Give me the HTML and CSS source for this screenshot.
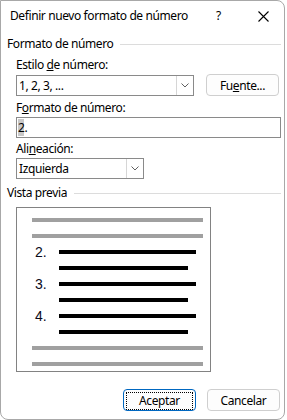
FILE: index.html
```html
<!DOCTYPE html>
<html lang="es">
<head>
  <meta charset="UTF-8" />
  <meta name="viewport" content="width=device-width, initial-scale=1.0" />
  <title>Definir nuevo formato de número</title>
  <link rel="stylesheet" href="styles.css">
</head>
<body>
  <div class="dialog">
    <div class="titlebar">
      <span class="title">Definir nuevo formato de número</span>
      <span class="help">?</span>
      <svg class="close" width="11" height="11" viewBox="0 0 11 11">
        <path d="M0.5 0.5 L10.5 10.5 M10.5 0.5 L0.5 10.5" stroke="#000" stroke-width="1.1" fill="none"/>
      </svg>
    </div>

    <div class="content">
      <div class="group-head"><span>Formato de número</span><div class="rule"></div></div>

      <div class="label label-style">Estilo <u>d</u>e número:</div>
      <div class="row">
        <div class="combo combo-style">
          <span class="value">1, 2, 3, ...</span>
          <span class="arrow">
            <svg width="8" height="5" viewBox="0 0 8 5"><path d="M0.5 0.5 L4 4 L7.5 0.5" stroke="#606060" stroke-width="1" fill="none"/></svg>
          </span>
        </div>
        <button class="btn btn-font">Fu<u>e</u>nte...</button>
      </div>

      <div class="label label-format">F<u>o</u>rmato de número:</div>
      <div class="input"><span class="sel">2</span>.</div>

      <div class="label label-align">Ali<u>n</u>eación:</div>
      <div class="combo combo-align">
        <span class="value">Izquierda</span>
        <span class="arrow">
          <svg width="8" height="5" viewBox="0 0 8 5"><path d="M0.5 0.5 L4 4 L7.5 0.5" stroke="#606060" stroke-width="1" fill="none"/></svg>
        </span>
      </div>

      <div class="group-head group-preview"><span>Vista previa</span><div class="rule"></div></div>

      <div class="preview">
        <div class="pv-row"><div class="bar gray"></div></div>
        <div class="pv-row"><div class="bar gray"></div></div>
        <div class="pv-item">
          <div class="num">2.</div>
          <div class="pv-bars">
            <div class="pv-row"><div class="bar long"></div></div>
            <div class="pv-row"><div class="bar short"></div></div>
          </div>
        </div>
        <div class="pv-item">
          <div class="num">3.</div>
          <div class="pv-bars">
            <div class="pv-row"><div class="bar long"></div></div>
            <div class="pv-row"><div class="bar short"></div></div>
          </div>
        </div>
        <div class="pv-item">
          <div class="num">4.</div>
          <div class="pv-bars">
            <div class="pv-row"><div class="bar long"></div></div>
            <div class="pv-row"><div class="bar short"></div></div>
          </div>
        </div>
        <div class="pv-row"><div class="bar gray"></div></div>
        <div class="pv-row"><div class="bar gray"></div></div>
      </div>

      <div class="actions">
        <button class="btn btn-ok"><span class="focus">Aceptar</span></button>
        <button class="btn">Cancelar</button>
      </div>
    </div>
  </div>
</body>
</html>
```

FILE: styles.css
```css
body {
  margin: 0;
  background: #fff;
  font-family: "Segoe UI", "Noto Sans", sans-serif;
  font-size: 12px;
  letter-spacing: -0.4px;
  color: #000;
}
.dialog {
  box-sizing: border-box;
  width: 285px;
  height: 420px;
  border: 1px solid #a8a8a8;
  border-radius: 0 8px 8px 8px;
  background: #fff;
  overflow: hidden;
}
.titlebar {
  display: flex;
  align-items: center;
  height: 30px;
  padding-left: 9px;
}
.title {
  flex: 1;
  line-height: 16px;
}
.help {
  width: 6px;
  margin-right: 36px;
  line-height: 16px;
}
.close {
  margin-right: 15px;
}
.content {
  padding: 0 3px 0 6px;
}
.group-head {
  display: flex;
  align-items: center;
  height: 16px;
  line-height: 16px;
  margin-top: 5px;
}
.rule {
  flex: 1;
  height: 1px;
  background: #dcdcdc;
  margin-left: 7px;
}
.label {
  height: 16px;
  line-height: 16px;
  margin-left: 9px;
}
.label-style {
  margin-top: 5px;
}
.label-format {
  margin-top: 4px;
}
.label-align {
  margin-top: 3px;
}
.row {
  display: flex;
  align-items: center;
  margin: 1px 0 0 9px;
  gap: 12px;
}
.combo {
  box-sizing: border-box;
  display: flex;
  height: 21px;
  border: 1px solid #8a8a8a;
  background: #fff;
}
.combo .value {
  flex: 1;
  padding-left: 2px;
  line-height: 19px;
}
.combo .arrow {
  width: 16px;
  border-left: 1px solid #d6d6d6;
  display: flex;
  align-items: center;
  justify-content: center;
}
.combo-style {
  width: 178px;
}
.combo-align {
  width: 128px;
  margin: 1px 0 0 9px;
}
.btn {
  box-sizing: border-box;
  height: 22px;
  width: 73px;
  border: 1px solid #cfcfcf;
  border-radius: 4px;
  background: #fdfdfd;
  font-family: inherit;
  font-size: 12px;
  letter-spacing: -0.4px;
  color: #000;
  padding: 0;
}
.input {
  box-sizing: border-box;
  height: 21px;
  margin: 1px 0 0 9px;
  border: 1px solid #8a8a8a;
  padding-left: 1px;
  line-height: 19px;
}
.sel {
  background: #c8c8c8;
}
.group-preview {
  margin-top: 6px;
}
.preview {
  box-sizing: border-box;
  width: 195px;
  height: 165px;
  margin: 6px 0 0 9px;
  border: 1px solid #828282;
  padding: 4px 7px 0 15px;
  overflow: hidden;
}
.pv-row {
  height: 16px;
  display: flex;
  align-items: center;
}
.bar {
  height: 4px;
  background: #000;
}
.bar.gray {
  width: 172px;
  background: #a0a0a0;
}
.bar.long {
  width: 137px;
}
.bar.short {
  width: 129px;
}
.pv-item {
  display: flex;
}
.num {
  width: 27px;
  padding-left: 3px;
  box-sizing: border-box;
  font-family: "Liberation Sans", Arial, sans-serif;
  font-size: 14px;
  letter-spacing: 0;
  line-height: 16px;
  color: #0a0a1a;
}
.actions {
  display: flex;
  justify-content: flex-end;
  gap: 11px;
  margin-top: 17px;
  padding-right: 1px;
}
.btn-ok {
  border: 1px solid #0067c0;
  padding: 2px;
}
.btn-ok .focus {
  display: block;
  height: 16px;
  line-height: 15px;
  border: 1px dotted #000;
}
```
